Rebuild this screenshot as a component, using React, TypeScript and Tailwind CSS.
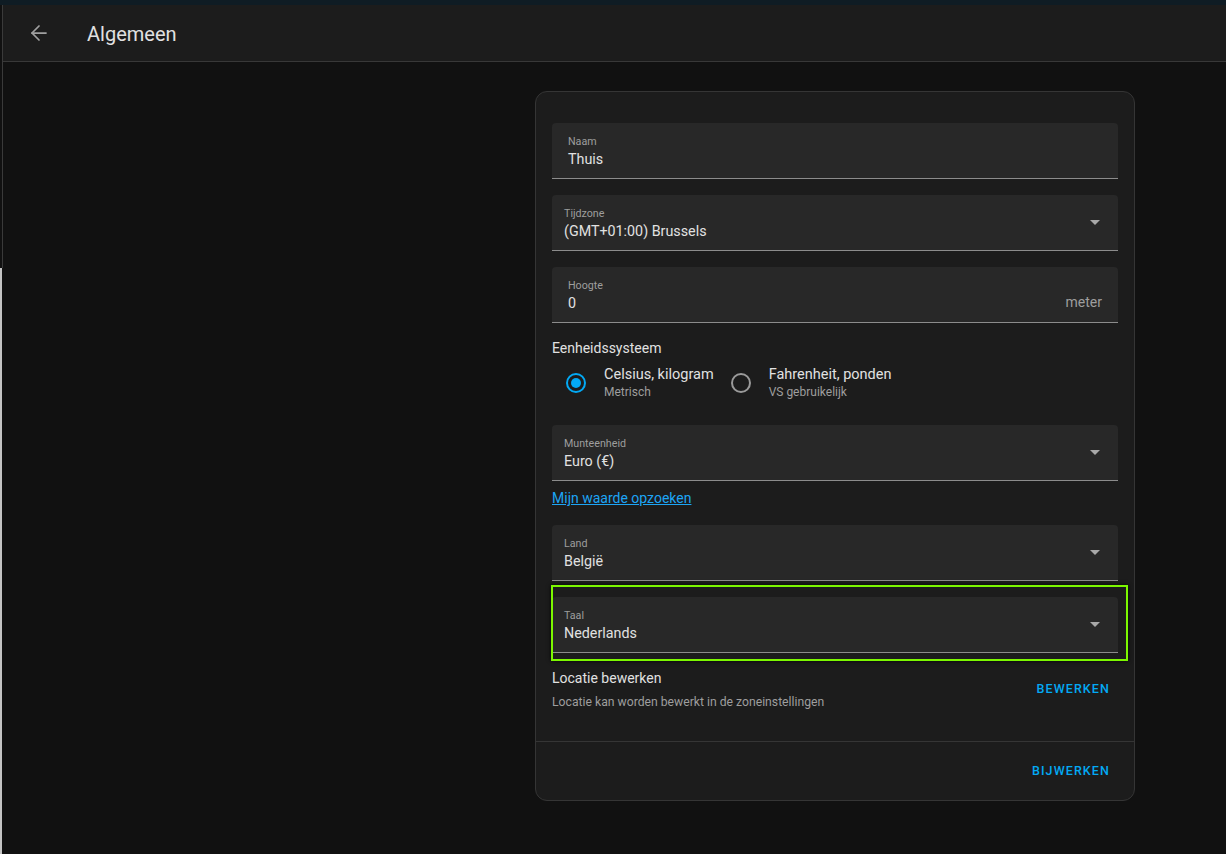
import { ArrowLeft } from "lucide-react";
import React from "react";

type FieldProps = {
  label: string;
  value: string;
  select?: boolean;
  suffix?: string;
};

function Field({ label, value, select, suffix }: FieldProps) {
  return (
    <div className="h-14 rounded-t-[4px] bg-[#282828] border-b border-[#8c8c8c] flex items-center">
      <div className={select ? "flex-1 self-start pt-[12px] pl-3" : "flex-1 self-start pt-[12px] pl-4"}>
        <p className="text-[10.7px] leading-[14px] text-[#9e9e9e]">{label}</p>
        <p className="text-[14.3px] leading-[20px] text-[#e1e1e1]">{value}</p>
      </div>
      {suffix && <span className="pr-4 pt-[15px] text-[14px] text-[#9e9e9e]">{suffix}</span>}
      {select && (
        <svg width="10" height="5" viewBox="0 0 10 5" className="mr-[18px]">
          <path d="M0 0 L10 0 L5 5 Z" fill="#a8a8a8" />
        </svg>
      )}
    </div>
  );
}

function Radio({ checked, title, sub }: { checked?: boolean; title: string; sub: string }) {
  return (
    <div className="flex items-center">
      <div className="w-10 h-10 flex items-center justify-center">
        <div
          className={
            checked
              ? "w-5 h-5 rounded-full border-2 border-[#03a9f4] flex items-center justify-center"
              : "w-5 h-5 rounded-full border-2 border-[#9a9a9a]"
          }
        >
          {checked && <div className="w-[10px] h-[10px] rounded-full bg-[#03a9f4]" />}
        </div>
      </div>
      <div className="pl-2">
        <p className="text-[14.5px] leading-[18px] text-[#e1e1e1]">{title}</p>
        <p className="text-[12px] leading-[16px] text-[#9e9e9e]">{sub}</p>
      </div>
    </div>
  );
}

export default function App() {
  return (
    <div className="h-screen w-full flex flex-col bg-[#111111] overflow-hidden" style={{ fontFamily: "Roboto, 'Noto Sans', sans-serif" }}>
      <div className="h-[5px] bg-[#0f1c24] shrink-0" />
      <div className="flex flex-1 min-h-0">
        <div className="w-[3px] flex flex-col shrink-0">
          <div className="h-[263px] border-r border-[#3a3a3a]" />
          <div className="flex-1 w-[2px] bg-[#c4c4c4]" />
        </div>
        <div className="flex-1 flex flex-col">
          <header className="h-[57px] bg-[#1c1c1c] border-b border-[#383838] flex items-center shrink-0">
            <ArrowLeft className="ml-[24px] w-6 h-6 text-[#a0a0a0]" strokeWidth={1.75} />
            <h1 className="ml-[36px] pt-[2px] text-[20px] text-[#e1e1e1] font-normal">Algemeen</h1>
          </header>
          <main className="flex-1 flex justify-start pt-[29px] pl-[532px]">
            <div className="w-[600px] h-[710px] rounded-[12px] border border-[#353535] bg-[#1c1c1c] flex flex-col">
              <div className="px-4 pt-[31px] flex flex-col">
                <Field label="Naam" value="Thuis" />
                <div className="h-4" />
                <Field label="Tijdzone" value="(GMT+01:00) Brussels" select />
                <div className="h-4" />
                <Field label="Hoogte" value="0" suffix="meter" />
                <p className="mt-[17px] text-[14px] leading-[17px] text-[#e1e1e1]">Eenheidssysteem</p>
                <div className="flex items-center gap-[7px] mt-[6px] pl-1">
                  <Radio checked title="Celsius, kilogram" sub="Metrisch" />
                  <Radio title="Fahrenheit, ponden" sub="VS gebruikelijk" />
                </div>
                <div className="h-[22px]" />
                <Field label="Munteenheid" value="Euro (€)" select />
                <a href="#" className="mt-[8px] text-[14px] leading-[18px] text-[#1da5f5] underline w-fit">
                  Mijn waarde opzoeken
                </a>
                <div className="h-[18px]" />
                <Field label="Land" value="België" select />
                <div className="h-4" />
                <div className="relative">
                  <Field label="Taal" value="Nederlands" select />
                  <div className="absolute left-[-1px] right-[-10px] top-[-12px] bottom-[-8px] border-2 border-[#7cf700] shadow-[0_0_4px_rgba(0,0,0,0.9)] pointer-events-none" />
                </div>
                <div className="flex items-start justify-between mt-[16px]">
                  <div>
                    <p className="text-[14px] leading-[18px] text-[#e1e1e1]">Locatie bewerken</p>
                    <p className="mt-[7px] text-[12.2px] leading-[16px] text-[#9e9e9e]">
                      Locatie kan worden bewerkt in de zoneinstellingen
                    </p>
                  </div>
                  <button className="mt-[11px] mr-[8px] text-[12.5px] font-medium tracking-[1.1px] text-[#03a9f4]">
                    BEWERKEN
                  </button>
                </div>
              </div>
              <div className="mt-auto h-[59px] border-t border-[#353535] flex items-center justify-end pr-6">
                <button className="text-[12.5px] font-medium tracking-[1.1px] text-[#03a9f4]">BIJWERKEN</button>
              </div>
            </div>
          </main>
        </div>
      </div>
    </div>
  );
}
